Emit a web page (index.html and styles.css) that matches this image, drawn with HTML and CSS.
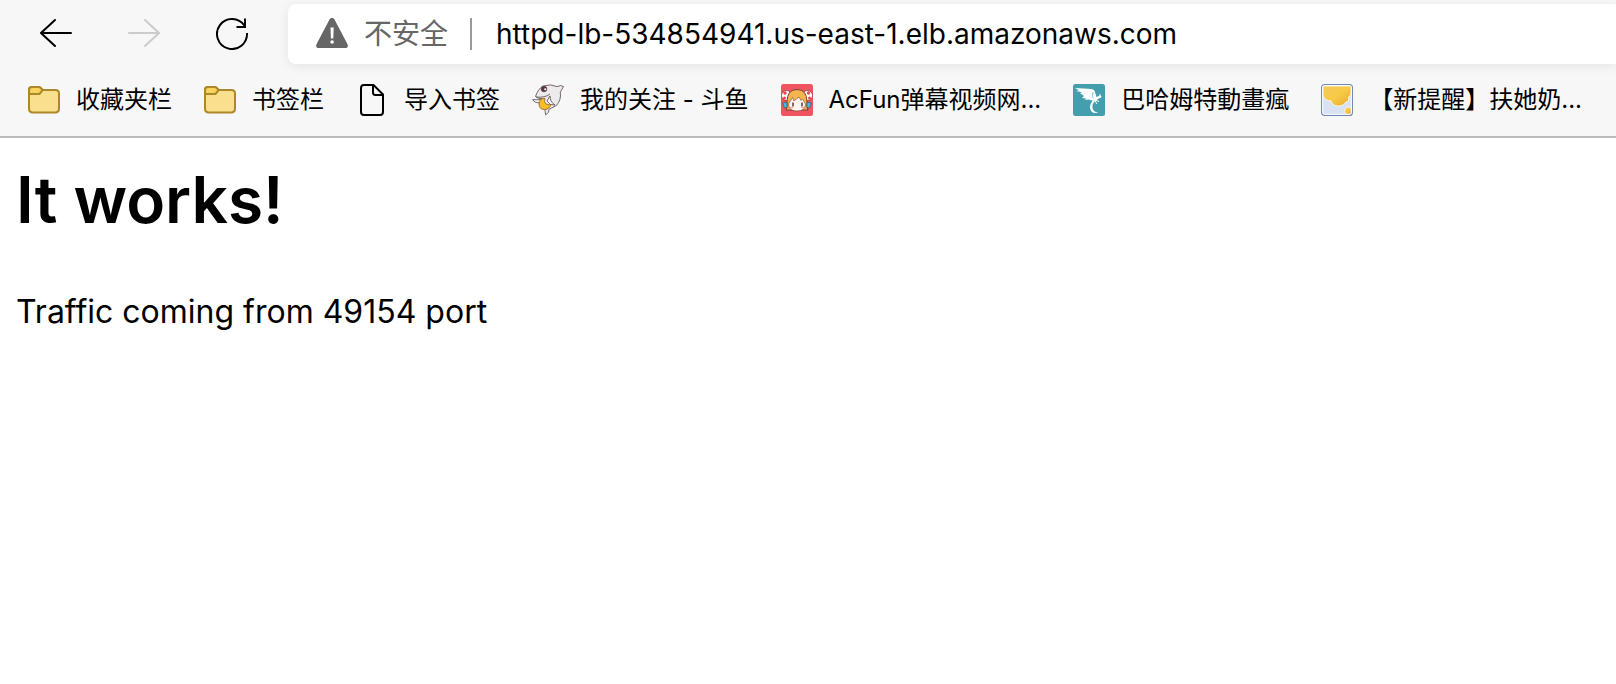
FILE: index.html
```html
<!DOCTYPE html>
<html lang="zh-CN">
<head>
<meta charset="utf-8">
<title>It works!</title>
<link rel="stylesheet" href="styles.css">
</head>
<body>
<header class="browser">
  <div class="toolbar">
    <nav class="controls" aria-label="导航">
      <button class="control" type="button" aria-label="返回">
        <svg class="icon" viewBox="0 0 32 32" fill="none" stroke="#000" stroke-width="2" stroke-linecap="round"><path d="M1.200 15H31M15 2 1 15l14 13"/></svg>
      </button>
      <button class="control" type="button" aria-label="前进" disabled>
        <svg class="icon" viewBox="0 0 32 32" fill="none" stroke="#cbcbcb" stroke-width="2" stroke-linecap="round"><path d="M1 15h29.800M17 2 31 15 17 28"/></svg>
      </button>
      <button class="control" type="button" aria-label="刷新">
        <svg class="icon" viewBox="0 0 32 32" fill="none" stroke="#000" stroke-width="2"><path d="M30.970 15A15 15 0 1 1 28.500 7.700M29 .5V9h-8.500"/></svg>
      </button>
    </nav>
    <div class="address">
      <svg class="icon" viewBox="0 0 32 32"><path fill="#666" d="M13.500 1.400Q16-1.800 18.500 1.400L31.400 26Q33 30 29 30H3Q-1 30 .6 26z"/><path fill="#fff" d="M14.500 9.500h3.200l-.4 11h-2.400z"/><circle cx="16.100" cy="24" r="1.800" fill="#fff"/></svg>
      <span class="security">不安全</span>
      <span class="divider"></span>
      <input class="url" type="text" aria-label="地址" value="httpd-lb-534854941.us-east-1.elb.amazonaws.com">
    </div>
  </div>
  <nav class="bookmarks" aria-label="书签">
    <a class="bookmark" href="#">
      <svg class="icon" viewBox="0 0 32 32" stroke="#ae8728" stroke-width="2"><path fill="#fae08e" d="M1 8V6q0-3 3-3h7.500L15 6h12.500Q31 6 31 9.500v15q0 4-4 4H5q-4 0-4-4z"/><path fill="#f5d45c" d="M1 10V6q0-3 3-3h7.500L14.800 6 11.500 10z"/></svg>
      <span>收藏夹栏</span>
    </a>
    <a class="bookmark" href="#">
      <svg class="icon" viewBox="0 0 32 32" stroke="#ae8728" stroke-width="2"><path fill="#fae08e" d="M1 8V6q0-3 3-3h7.500L15 6h12.500Q31 6 31 9.500v15q0 4-4 4H5q-4 0-4-4z"/><path fill="#f5d45c" d="M1 10V6q0-3 3-3h7.500L14.800 6 11.500 10z"/></svg>
      <span>书签栏</span>
    </a>
    <a class="bookmark" href="#">
      <svg class="icon" viewBox="0 0 32 32" fill="none" stroke="#000" stroke-width="2" stroke-linejoin="round"><path d="M8 1h9.500L27 10.500V28q0 3-3 3H8q-3 0-3-3V4q0-3 3-3zM17 1v7.500q0 2.500 2.500 2.500H27"/></svg>
      <span>导入书签</span>
    </a>
    <a class="bookmark" href="#">
      <svg class="icon" viewBox="0 0 32 32" stroke="#574646" stroke-width=".8" stroke-linejoin="round"><path fill="#eceaea" d="M3.500 12.500Q6 5 11 2q8-2.500 14 .6 4-2 6.500-.1l-3.200 5.600q1.200 8-4 13.500l-7.300 3.800q.8 3-3.400 5.500-1-5-.4-7.600L10 14.500q-4 .6-6.500-2z"/><path fill="none" d="M4 13q9 1 14-3M9 19Q2 19 .8 15.500 5 16 9 15.500"/><path fill="#f8bc2b" stroke="#8a6021" d="M13 14.500Q7 14 7 20q0 5.500 5.500 5.500T19 19.500q-3 2-5 .5-2.500-2.500-1-5.500z"/><path fill="#f7f5f5" d="M18 12q0 6 5 9-5 1-8-4z"/><circle cx="12" cy="5" r="2.800" fill="#5c3442"/><circle cx="13.200" cy="5.200" r="1" fill="#fff" stroke="none"/></svg>
      <span>我的关注 - 斗鱼</span>
    </a>
    <a class="bookmark" href="#">
      <svg class="icon" viewBox="0 0 32 32"><rect width="32" height="32" rx="2.500" fill="#ef555f"/><g stroke="#9a353d" stroke-width=".8"><circle cx="5.500" cy="11.500" r="5" fill="#fff"/><circle cx="26.500" cy="11.500" r="5" fill="#fff"/></g><g fill="#ef4452"><circle cx="4" cy="9" r="1.700"/><circle cx="3.500" cy="14" r="1.500"/><circle cx="27.500" cy="9" r="1.700"/><circle cx="28.500" cy="14" r="1.500"/></g><path fill="#42b9e7" stroke="#315d70" stroke-width=".7" d="m1.500 19 5-1 1 5-4 1zM30.500 19l-5-1-1 5 4 1z"/><path fill="#f6b44e" stroke="#75423b" stroke-width="1" d="M5 26Q7 23 6 18 6 5.500 16 5.500T26 18q-1 5 1 8z"/><path fill="#fff5ef" stroke="#75423b" stroke-width=".6" d="M7.500 20 11.500 13.500l1.500 3.500 5-4 2 3.500 1.500-1.500 3 5q0 7-8.500 7t-8.500-7z"/><path stroke="#573b3b" stroke-width="1.500" d="M12 18.500v4m9-4v4"/><path stroke="#f5a7a2" stroke-width="1.500" d="M9 23.500h3m8 0h3"/></svg>
      <span>AcFun弹幕视频网...</span>
    </a>
    <a class="bookmark" href="#">
      <svg class="icon" viewBox="0 0 32 32"><rect width="32" height="32" rx="2.500" fill="#459eae"/><path fill="#fff" d="M2 4 18.500 5q3 .5 3.500 3l1.500 5 2.500-1 1-2.500.8 2.500 1 1-2.800 1.500L22 17q-3 3-2.500 7 1 4 5.500 4.500-4 1.500-6.500-1-3.500-4.500 1-11l-4-1-4 .5 2-1.500-4.500-.5 2-2L7 9l2-.7L3 7l3-.8z"/><path stroke="#459eae" stroke-width=".6" fill="none" d="M20 8q-1 4 0 6"/><path stroke="#fff" fill="none" d="m22 16 4 1.500M22 17l2 3"/></svg>
      <span>巴哈姆特動畫瘋</span>
    </a>
    <a class="bookmark" href="#">
      <svg class="icon" viewBox="0 0 32 32"><defs><linearGradient id="honey" x2="1" y2="1"><stop stop-color="#f6c85f"/><stop offset=".5" stop-color="#f7ca45"/><stop offset="1" stop-color="#e9a62e"/></linearGradient></defs><rect x=".6" y=".6" width="30.800" height="30.800" rx="3" fill="#d8e2f1" stroke="#7189b5" stroke-width="1.200"/><rect x="1.700" y="1.700" width="28.600" height="28.600" rx="2" fill="none" stroke="#fff"/><path fill="url(#honey)" stroke="#fff" stroke-width=".8" d="M2 2h28v7q0 3-2.500 4 1 4-3 5.500-2 3.500-7 3.500-6 0-7.500-5Q4 17 2 12z"/><path fill="url(#honey)" stroke="#fff" stroke-width=".7" d="M30 23.500v6.500h-5Q22.500 27.500 24 25q2-3 6-1.500z"/></svg>
      <span>【新提醒】扶她奶...</span>
    </a>
  </nav>
</header>
<main class="page">
  <h1 class="title">It works!</h1>
  <p class="message">Traffic coming from 49154 port</p>
</main>
</body>
</html>
```
FILE: styles.css
```css
* {
  box-sizing: border-box;
}

body {
  margin: 0;
  background: #fff;
  color: #000;
  font-family: Inter, "Noto Sans CJK SC", sans-serif;
}

.browser {
  overflow: hidden;
  background: #f7f7f7;
  border-bottom: 2px solid #bbb;
}

.toolbar {
  display: flex;
  align-items: center;
  gap: 40px;
  padding: 4px 0 4px 40px;
}

.controls {
  display: flex;
  flex: none;
  gap: 56px;
}

.control {
  padding: 0;
  border: 0;
  background: none;
}

.icon {
  display: block;
  flex: none;
  width: 32px;
  height: 32px;
}

.address {
  display: flex;
  flex: 1;
  align-items: center;
  min-width: 0;
  height: 60px;
  padding-left: 28px;
  border-radius: 8px 0 0 8px;
  background: #fff;
  box-shadow: 0 2px 12px rgba(0, 0, 0, 0.08);
}

.security {
  flex: none;
  margin-left: 16px;
  color: #666;
  font-size: 28px;
  line-height: 40px;
}

.divider {
  flex: none;
  width: 2px;
  height: 32px;
  margin: 0 24px 0 22px;
  background: #999;
}

.url {
  flex: 1;
  min-width: 0;
  padding: 0;
  border: 0;
  outline: 0;
  background: none;
  color: #000;
  font-family: inherit;
  font-size: 28px;
  line-height: 40px;
}

.bookmarks {
  display: flex;
  gap: 32px;
  padding: 16px 28px 20px;
}

.bookmark {
  display: flex;
  flex: none;
  align-items: center;
  gap: 16px;
  color: #000;
  font-size: 24px;
  line-height: 32px;
  text-decoration: none;
  white-space: nowrap;
}

.page {
  padding: 22px 16px;
}

.title {
  margin: 0 0 52px;
  font-size: 64px;
  font-weight: 600;
  line-height: 80px;
}

.message {
  margin: 0;
  font-size: 32px;
  line-height: 40px;
}
```
